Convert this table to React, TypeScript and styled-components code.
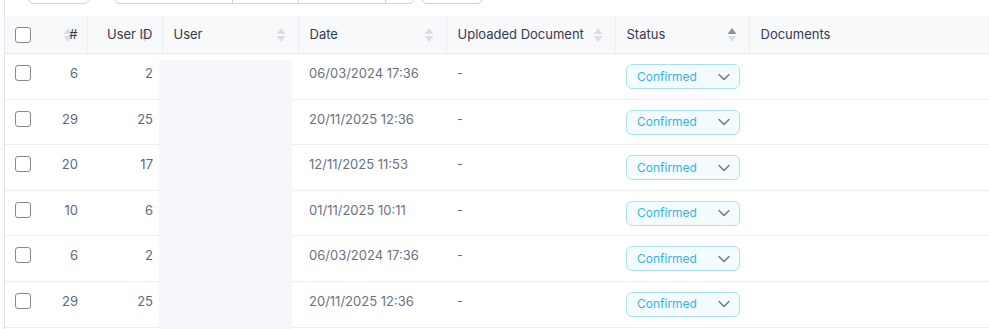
import React from "react";
import styled, { createGlobalStyle } from "styled-components";

const GlobalStyle = createGlobalStyle`
  html, body {
    margin: 0;
    padding: 0;
    background: #ffffff;
    overflow: hidden;
  }
  body {
    font-family: Inter, "Noto Sans", sans-serif;
  }
`;

const Page = styled.div`
  position: relative;
  width: 989px;
  height: 329px;
  overflow: hidden;
  padding-left: 4px;
  box-sizing: border-box;
  background: #fbfcfd;
`;

const Panel = styled.div`
  display: flow-root;
  border-left: 1px solid #e1e6ee;
  background: #ffffff;
  height: 100%;
`;

const Toolbar = styled.div`
  display: flex;
  align-items: flex-end;
  height: 32px;
  margin-top: -28px;
  padding-left: 23px;
`;

const ToolButton = styled.div<{ $w: number; $gap?: number }>`
  width: ${(p) => p.$w}px;
  height: 32px;
  margin-left: ${(p) => p.$gap ?? 0}px;
  border: 1px solid #ccd4df;
  border-radius: 6px;
  box-sizing: border-box;
  background: #fff;
`;

const ToolGroup = styled.div`
  display: flex;
  margin-left: 24px;
  height: 32px;
  border: 1px solid #ccd4df;
  border-radius: 6px;
  box-sizing: border-box;
  overflow: hidden;
`;

const Segment = styled.div<{ $w: number }>`
  width: ${(p) => p.$w}px;
  height: 100%;
  box-sizing: border-box;
  & + & {
    border-left: 1px solid #ccd4df;
  }
`;

const TableWrap = styled.div`
  position: relative;
  margin-top: 12px;
`;

const Table = styled.table`
  width: 1000px;
  border-collapse: collapse;
  table-layout: fixed;
  font-size: 13px;
`;

const HeadCell = styled.th<{ $align?: string }>`
  position: relative;
  height: 36px;
  padding: 0 ${(p) => (p.$align === "right" ? "9px" : "11px")} 1px;
  background: #f8f9fb;
  border-bottom: 1px solid #e8ebf0;
  text-align: ${(p) => p.$align ?? "left"};
  font-weight: 400;
  color: #333c4c;
  white-space: nowrap;
  & + & {
    border-left: 1px solid #eaedf1;
  }
`;

const HeadLabel = styled.span`
  position: relative;
  z-index: 1;
`;

const Sorter = styled.svg<{ $right: number }>`
  position: absolute;
  top: 50%;
  right: ${(p) => p.$right}px;
  margin-top: -8px;
`;

const Row = styled.tr`
  height: 45.6px;
`;

const Cell = styled.td<{ $align?: string; $tone?: string }>`
  vertical-align: top;
  padding: 8px ${(p) => (p.$align === "right" ? "9px" : "11px")} 0;
  line-height: 22px;
  border-bottom: 1px solid #eceef2;
  text-align: ${(p) => p.$align ?? "left"};
  color: ${(p) => p.$tone ?? "#6a7282"};
  white-space: nowrap;
`;

const CheckCell = styled.td`
  vertical-align: top;
  padding: 11px 0 0 10px;
  border-bottom: 1px solid #eceef2;
`;

const HeadCheckCell = styled.th`
  padding: 0 0 0 10px;
  height: 37px;
  background: #f8f9fb;
  border-bottom: 1px solid #e8ebf0;
  text-align: left;
`;

const Checkbox = styled.span`
  display: block;
  width: 16px;
  height: 16px;
  border: 1px solid #85898f;
  border-radius: 3px;
  box-sizing: border-box;
  background: #fff;
`;

const StatusPill = styled.div`
  display: flex;
  align-items: center;
  justify-content: space-between;
  width: 114px;
  height: 25px;
  margin-top: 2px;
  padding: 0 9px 0 10px;
  box-sizing: border-box;
  border: 1px solid #a9e2f1;
  border-radius: 6px;
  background: #f3fbfe;
  color: #3ab3d9;
  font-size: 12px;
  line-height: 1;
`;

const Redaction = styled.div`
  position: absolute;
  left: 154px;
  top: 44px;
  width: 133px;
  height: 400px;
  background: linear-gradient(160deg, #f7f8fb 0%, #f5f6fa 45%, #f7f8fb 100%);
  z-index: 2;
`;

type SortProps = { right: number; active?: boolean };

function SortIcon({ right, active }: SortProps) {
  return (
    <Sorter $right={right} width="10" height="16" viewBox="0 0 10 16">
      <path d="M0.5 7 L5 1 L9.5 7 Z" fill={active ? "#8b929c" : "#dadee4"} />
      <path d="M0.5 9 L9.5 9 L5 15 Z" fill="#dadee4" />
    </Sorter>
  );
}

function Chevron() {
  return (
    <svg width="12" height="8" viewBox="0 0 12 8">
      <polyline
        points="1,1.5 6,6.5 11,1.5"
        fill="none"
        stroke="#7a7f87"
        strokeWidth="1.6"
        strokeLinecap="round"
        strokeLinejoin="round"
      />
    </svg>
  );
}

const rows = [
  { no: 6, id: 2, date: "06/03/2024 17:36" },
  { no: 29, id: 25, date: "20/11/2025 12:36" },
  { no: 20, id: 17, date: "12/11/2025 11:53" },
  { no: 10, id: 6, date: "01/11/2025 10:11" },
  { no: 6, id: 2, date: "06/03/2024 17:36" },
  { no: 29, id: 25, date: "20/11/2025 12:36" },
];

export default function App() {
  return (
    <Page>
      <GlobalStyle />
      <Panel>
        <Toolbar>
          <ToolButton $w={62} />
          <ToolGroup>
            <Segment $w={117} />
            <Segment $w={66} />
            <Segment $w={87} />
            <Segment $w={29} />
          </ToolGroup>
          <ToolButton $w={62} $gap={6} />
        </Toolbar>

        <TableWrap>
          <Table>
            <colgroup>
              <col style={{ width: 41 }} />
              <col style={{ width: 41 }} />
              <col style={{ width: 75 }} />
              <col style={{ width: 136 }} />
              <col style={{ width: 148 }} />
              <col style={{ width: 169 }} />
              <col style={{ width: 134 }} />
              <col />
            </colgroup>
            <thead>
              <tr>
                <HeadCheckCell>
                  <Checkbox />
                </HeadCheckCell>
                <HeadCell $align="right">
                  <SortIcon right={14} />
                  <HeadLabel>#</HeadLabel>
                </HeadCell>
                <HeadCell $align="right">
                  <SortIcon right={12} />
                  <HeadLabel>User ID</HeadLabel>
                </HeadCell>
                <HeadCell>
                  User
                  <SortIcon right={12} />
                </HeadCell>
                <HeadCell>
                  Date
                  <SortIcon right={12} />
                </HeadCell>
                <HeadCell>
                  Uploaded Document
                  <SortIcon right={12} />
                </HeadCell>
                <HeadCell>
                  Status
                  <SortIcon right={12} active />
                </HeadCell>
                <HeadCell>Documents</HeadCell>
              </tr>
            </thead>
            <tbody>
              {rows.map((r, i) => (
                <Row key={i}>
                  <CheckCell>
                    <Checkbox />
                  </CheckCell>
                  <Cell $align="right" $tone="#5d6a7c">
                    {r.no}
                  </Cell>
                  <Cell $align="right" $tone="#5d6a7c">
                    {r.id}
                  </Cell>
                  <Cell />
                  <Cell>{r.date}</Cell>
                  <Cell>-</Cell>
                  <Cell>
                    <StatusPill>
                      Confirmed
                      <Chevron />
                    </StatusPill>
                  </Cell>
                  <Cell />
                </Row>
              ))}
            </tbody>
          </Table>
          <Redaction />
        </TableWrap>
      </Panel>
    </Page>
  );
}
